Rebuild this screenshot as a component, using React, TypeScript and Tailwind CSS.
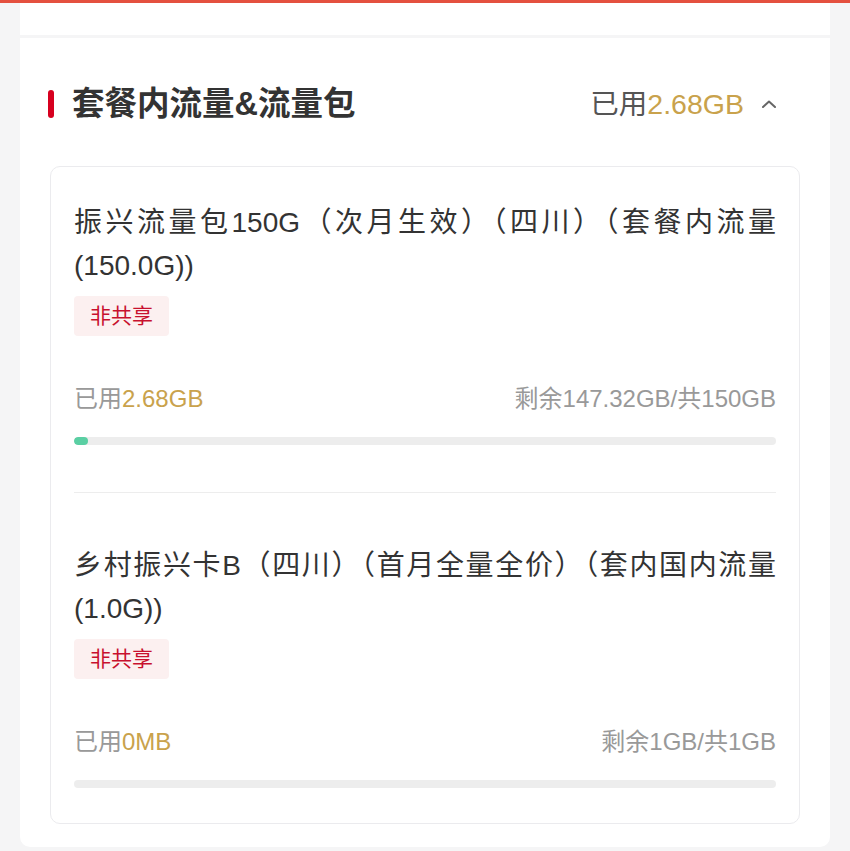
const FONT = { fontFamily: '"Liberation Sans", "Noto Sans CJK SC", sans-serif' };

type Pack = {
  name: string;
  used: string;
  rest: string;
  percent: number;
};

const packs: Pack[] = [
  {
    name: "振兴流量包150G（次月生效）（四川）（套餐内流量(150.0G))",
    used: "2.68GB",
    rest: "剩余147.32GB/共150GB",
    percent: 1.79,
  },
  {
    name: "乡村振兴卡B（四川）（首月全量全价）（套内国内流量(1.0G))",
    used: "0MB",
    rest: "剩余1GB/共1GB",
    percent: 0,
  },
];

function PackItem({ pack, first }: { pack: Pack; first: boolean }) {
  return (
    <div
      className={
        first
          ? "pt-[34px] pb-[47px]"
          : "pt-[51px] pb-[35px] border-t border-[#ededed]"
      }
    >
      <div className="text-[28px] leading-[43px] text-[#333] text-justify">
        {pack.name}
      </div>
      <div className="mt-[9px] flex">
        <span className="h-[40px] px-[16px] flex items-center rounded-[4px] bg-[#fcf0f0] text-[21px] text-[#c8102e]">
          非共享
        </span>
      </div>
      <div className="mt-[47px] flex items-center justify-between text-[24px] leading-[32px] text-[#999]">
        <span>
          已用<span className="text-[#c9a24c]">{pack.used}</span>
        </span>
        <span>{pack.rest}</span>
      </div>
      <div className="mt-[22px] h-[8px] rounded-full bg-[#ededed] overflow-hidden">
        {pack.percent > 0 && (
          <div
            className="h-full rounded-full bg-[#5acfa3] min-w-[14px]"
            style={{ width: `${pack.percent}%` }}
          />
        )}
      </div>
    </div>
  );
}

export default function App() {
  return (
    <div className="min-h-[851px] bg-[#f5f5f6]" style={FONT}>
      <div className="h-[3px] bg-[#e4503f]" />
      <div className="mx-[20px] h-[32px] bg-white" />
      <div className="mx-[20px] mt-[3px] bg-white rounded-b-[10px] pt-[34px] pb-[23px]">
        <div className="h-[64px] pl-[28px] pr-[54px] flex items-center justify-between">
          <div className="flex items-center">
            <span className="w-[6px] h-[28px] rounded-full bg-[#d7001f]" />
            <span className="ml-[18px] text-[32.5px] font-bold text-[#333]">
              套餐内流量&amp;流量包
            </span>
          </div>
          <div className="flex items-center">
            <span className="text-[28.5px] text-[#555]">
              已用<span className="text-[#c9a24c]">2.68GB</span>
            </span>
            <svg
              className="ml-[18px]"
              width="14"
              height="8"
              viewBox="0 0 14 8"
              fill="none"
            >
              <path
                d="M1 7L7 1.5L13 7"
                stroke="#666"
                strokeWidth="2"
                strokeLinecap="round"
                strokeLinejoin="round"
              />
            </svg>
          </div>
        </div>
        <div className="mx-[30px] mt-[30px] border border-[#ebebee] rounded-[10px] px-[23px]">
          {packs.map((p, i) => (
            <PackItem key={i} pack={p} first={i === 0} />
          ))}
        </div>
      </div>
    </div>
  );
}
